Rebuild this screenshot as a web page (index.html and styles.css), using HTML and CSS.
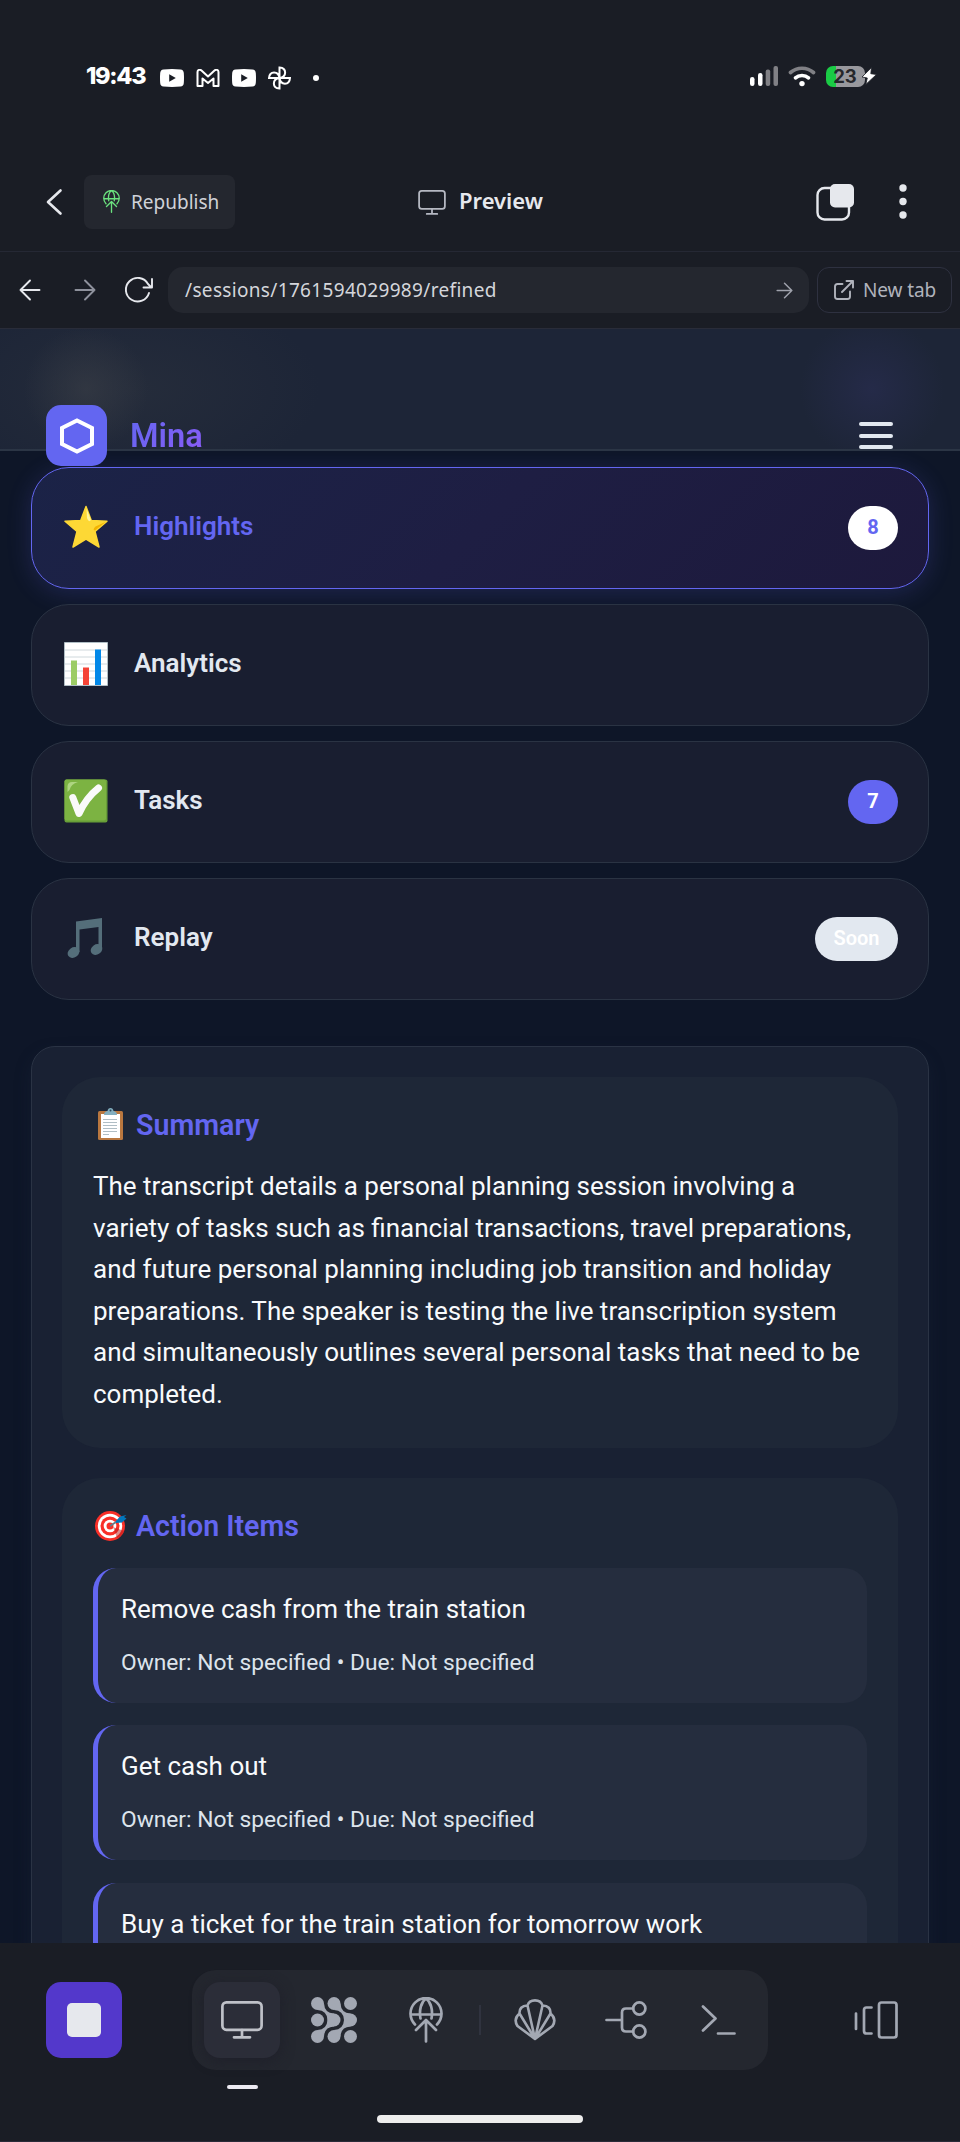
FILE: index.html
```html
<!DOCTYPE html>
<html lang="en">
<head>
<meta charset="utf-8">
<title>Mina</title>
<link rel="stylesheet" href="styles.css">
</head>
<body>
<svg class="defs" width="0" height="0">
  <defs>
    <symbol id="yt" viewBox="0 0 24 18"><path fill="#fff" fill-rule="evenodd" d="M3.500 0.400Q12-0.400 20.500 0.400Q23.600 0.800 23.800 4Q24.200 9 23.800 14Q23.600 17.200 20.500 17.600Q12 18.400 3.500 17.600Q.4 17.200.2 14Q-.2 9 .2 4Q.4.800 3.500.4ZM9.200 5.200V12.800L15.800 9Z"/></symbol>
    <symbol id="monitor" viewBox="0 0 42 38"><g fill="none" stroke="currentColor" stroke-width="2.700" stroke-linecap="round"><rect x="1.400" y="1.400" width="39.200" height="27.400" rx="4"/><path d="M21 29v7M13 36.300h16"/></g></symbol>
    <symbol id="publish" viewBox="0 0 34 46"><g fill="none" stroke="currentColor" stroke-width="2.700" stroke-linecap="round" stroke-linejoin="round"><path d="M6 27.500A15.500 15.500 0 1 1 28 27.500M1.500 17.500h31M11.500 21.500C10 13 12 5 17 1.500C22 5 24 13 22.500 21.500M17 44.500V24M7 33L17 23L27 33"/></g></symbol>
  </defs>
</svg>
<div class="phone">
  <div class="status">
    <span class="time">19:43</span>
    <div class="notifs">
      <svg width="24" height="18"><use href="#yt"/></svg>
      <svg width="24" height="18" viewBox="0 0 24 18" fill="none" stroke="#fff" stroke-width="2"><path stroke-linejoin="round" d="M1.500 17V3C1.500.6 4 .3 5.500 1.500L12 7.500L18.500 1.500C20 .3 22.500.6 22.500 3V17H17.500V9.500L12 14L6.500 9.500V17Z"/></svg>
      <svg width="24" height="18"><use href="#yt"/></svg>
      <svg class="fan" width="23" height="24" viewBox="0 0 23 24" fill="none" stroke="#fff" stroke-width="2"><path d="M11.500 12V1.500C19 2 19 11 11.500 12ZM11.500 12V22.500C4 22 4 13 11.500 12ZM11.500 12H22C21.500 19.500 12.500 19.500 11.500 12ZM11.500 12H1C1.500 4.500 10.500 4.500 11.500 12Z"/></svg>
      <i class="dot"></i>
    </div>
    <div class="sys">
      <svg width="28" height="20" viewBox="0 0 28 20"><g fill="#fff"><rect x="0" y="11" width="4.500" height="9" rx="2.200"/><rect x="8" y="7" width="4.500" height="13" rx="2.200"/></g><g fill="#808085"><rect x="15.700" y="3.500" width="4.500" height="16.500" rx="2"/><rect x="23.500" y="0" width="4.500" height="20" rx="2"/></g></svg>
      <svg width="28" height="21" viewBox="0 0 28 21" fill="none" stroke-width="3.700" stroke-linecap="round"><path stroke="#808085" d="M2.500 6.500C9 .8 19 .8 25.500 6.500"/><path stroke="#fff" d="M7.500 11.800C11 8.700 17 8.700 20.500 11.800"/><circle cx="14" cy="17.600" r="2.700" fill="#fff"/></svg>
      <div class="battery"><span>23</span></div>
      <svg class="bolt" width="16" height="18" viewBox="0 0 16 18"><path fill="#fff" stroke="#1a1d25" stroke-width=".8" d="M10.500.6L1 10L6.300 11L4.800 17.400L15.500 7.500L9.800 6.700Z"/></svg>
    </div>
  </div>

  <div class="topbar">
    <svg class="back" width="18" height="28" viewBox="0 0 18 28"><path d="M15.500 2.500L3 14L15.500 25.500" fill="none" stroke="#e6e8ed" stroke-width="2.600" stroke-linecap="round" stroke-linejoin="round"/></svg>
    <button class="republish"><svg width="17" height="23"><use href="#publish"/></svg><span>Republish</span></button>
    <div class="title"><svg width="28" height="25"><use href="#monitor"/></svg><span>Preview</span></div>
    <svg class="tabs" width="38" height="38" viewBox="0 0 38 38"><rect x="1.500" y="5" width="31.500" height="31.500" rx="7" fill="none" stroke="#e6e8ed" stroke-width="2.400"/><rect x="14" y="1" width="24" height="23.500" rx="5" fill="#e6e8ed"/></svg>
    <svg width="8" height="36" viewBox="0 0 8 36" fill="#e6e8ed"><circle cx="4" cy="4" r="3.700"/><circle cx="4" cy="17.500" r="3.700"/><circle cx="4" cy="31" r="3.700"/></svg>
  </div>

  <div class="urlbar">
    <svg class="nav-back" width="22" height="22" viewBox="0 0 22 22"><path d="M20.500 11H1.500M11 1.500L1.500 11L11 20.500"/></svg>
    <svg class="nav-fwd" width="22" height="22" viewBox="0 0 22 22"><path d="M1.500 11H20.500M11 1.500L20.500 11L11 20.500"/></svg>
    <svg class="reload" width="30" height="28" viewBox="0 0 30 28"><path d="M25 17A11.800 11.800 0 1 1 24 8L27.500 11.500M28 3V11.500H19.500"/></svg>
    <div class="url"><span>/sessions/1761594029989/refined</span><svg width="17" height="17" viewBox="0 0 22 22"><path d="M1.500 11H20.500M11 1.500L20.500 11L11 20.500"/></svg></div>
    <button class="newtab"><svg width="20" height="20" viewBox="0 0 20 20"><path d="M8.500 4H3.500Q1 4 1 6.500V16.500Q1 19 3.500 19H13.500Q16 19 16 16.500V11.500M12.500 1H19V7.500M19 1L8 12"/></svg><span>New tab</span></button>
  </div>

  <main class="view">
    <header class="appbar">
      <div class="logo"><svg width="36" height="36" viewBox="0 0 36 36"><path d="M18 2.500L33 10V26L18 33.500L3 26V10Z" fill="none" stroke="#fff" stroke-width="4"/></svg></div>
      <span class="brand">Mina</span>
      <div class="menu"><i></i><i></i><i></i></div>
    </header>

    <nav class="sections">
      <div class="tab active">
        <svg width="44" height="44" viewBox="0 0 44 44"><path fill="#fdd835" stroke="#fdd835" stroke-width="1.500" stroke-linejoin="round" d="M22 1.500L27.300 15.500L43 16.300L31 26.500L35 42L22 34L9 42L13 26.500L1 16.300L16.700 15.500Z"/><path fill="#fff59d" d="M22.500 3.500L27 15Q24.500 18 23 13Z"/><path fill="#f4b400" d="M41.500 17L31 25.500Q28 25 31.500 21.500Z"/></svg>
        <span class="label">Highlights</span><span class="badge">8</span>
      </div>
      <div class="tab">
        <svg width="44" height="44" viewBox="0 0 44 44"><path fill="#fff" stroke="#b0bec5" d="M.5.500H43.500V43.500H.5Z"/><path stroke="#cfd8dc" stroke-width="1" d="M1 8H43M1 15H43M1 22H43M1 29H43M1 36H43"/><path fill="#9ccc65" d="M7 18.500h6V43H7z"/><path fill="#f44336" d="M19 25.500h6V43h-6z"/><path fill="#0288e8" d="M31 7.500h6V43h-6z"/></svg>
        <span class="label">Analytics</span>
      </div>
      <div class="tab">
        <svg width="44" height="44" viewBox="0 0 44 44"><rect x=".5" y=".5" width="43" height="43" rx="2" fill="#689f38"/><rect x=".5" y=".5" width="41.500" height="41" rx="2" fill="#7cb342"/><path fill="#aed581" d="M3.500 13V7Q4 3 8 3H14Q7 5 5.500 11Z"/><path d="M8.800 18.500L15 34.500Q22 19 34.500 9" fill="none" stroke="#fafafa" stroke-width="7" stroke-linecap="round" stroke-linejoin="round"/></svg>
        <span class="label">Tasks</span><span class="badge">7</span>
      </div>
      <div class="tab">
        <svg width="44" height="44" viewBox="0 0 44 44" fill="#546e7a"><path d="M12 5.500L38 2V34H34.500V11L15.500 13.500V36H12Z"/><ellipse cx="9.500" cy="36.500" rx="6.200" ry="5" transform="rotate(-35 9.500 36.500)"/><ellipse cx="32.500" cy="33.500" rx="6.200" ry="5" transform="rotate(-35 32.500 33.500)"/></svg>
        <span class="label">Replay</span><span class="badge soon">Soon</span>
      </div>
    </nav>

    <section class="panel">
      <article class="card">
        <h2><svg width="34" height="34" viewBox="0 0 34 34"><rect x="5" y="4" width="25" height="29" rx="1.500" fill="#b9773f"/><path fill="#fff" d="M8 7H27V31H8Z"/><path stroke="#b0bec5" stroke-width="1" d="M10 12.500H24M10 15.500H24M10 18.500H24M10 21.500H24M10 24.500H24M10 27.500H16"/><path fill="#82aebf" d="M11 8Q11 4.500 14.500 4Q15 1 17.500 1Q20 1 20.500 4Q24 4.500 24 8Z"/><circle cx="17.500" cy="3.500" r="1" fill="#2f4858"/></svg><span>Summary</span></h2>
        <p class="summary">The transcript details a personal planning session involving a<br>variety of tasks such as financial transactions, travel preparations,<br>and future personal planning including job transition and holiday<br>preparations. The speaker is testing the live transcription system<br>and simultaneously outlines several personal tasks that need to be<br>completed.</p>
      </article>
      <article class="card">
        <h2><svg width="34" height="34" viewBox="0 0 34 34"><circle cx="17" cy="18" r="15" fill="#f92f28"/><circle cx="17" cy="18" r="12.200" fill="#fff"/><circle cx="17" cy="18" r="9.500" fill="#f92f28"/><circle cx="17" cy="18" r="6.300" fill="#fff"/><circle cx="17" cy="18" r="3.500" fill="#f92f28"/><path fill="#b71c1c" opacity=".5" d="M20 19L31 23Q28 29 24 30Z"/><path d="M17 18L26 12" stroke="#607d8b" stroke-width="1.800"/><path fill="#0277bd" d="M23 13L27 8.500L33.500 7L31 9L33.500 10.500L29 14.500L23 15Z"/></svg><span>Action Items</span></h2>
        <div class="items">
          <div class="item"><p>Remove cash from the train station</p><small>Owner: Not specified • Due: Not specified</small></div>
          <div class="item"><p>Get cash out</p><small>Owner: Not specified • Due: Not specified</small></div>
          <div class="item"><p>Buy a ticket for the train station for tomorrow work</p></div>
        </div>
      </article>
    </section>
  </main>

  <footer class="bottom">
    <div class="stop"><i></i></div>
    <div class="dock">
      <div class="tool on"><svg width="42" height="38"><use href="#monitor"/></svg></div>
      <div class="tool"><svg width="46" height="46" viewBox="0 0 46 46" fill="currentColor"><circle cx="6.500" cy="6.500" r="6.500"/><circle cx="23" cy="6.500" r="6.500"/><circle cx="39.500" cy="6.500" r="6.500"/><circle cx="6.500" cy="23" r="6.500"/><circle cx="23" cy="23" r="6.500"/><circle cx="39.500" cy="23" r="6.500"/><circle cx="6.500" cy="39.500" r="6.500"/><circle cx="23" cy="39.500" r="6.500"/><circle cx="39.500" cy="39.500" r="6.500"/><path d="M13 6.500Q13.500 16 23 16.500V29.500Q13.500 30 13 39.500L6.500 33Q16 32.500 16.500 23Q16 13.500 6.500 13ZM29.500 6.500Q30 16 39.500 16.500V29.500Q30 30 29.500 39.500L23 33Q32.500 32.500 33 23Q32.500 13.500 23 13Z"/></svg></div>
      <div class="tool"><svg width="34" height="46"><use href="#publish"/></svg></div>
      <i class="divider"></i>
      <div class="tool"><svg width="42" height="42" viewBox="0 0 42 42" fill="none" stroke="currentColor" stroke-width="2.600" stroke-linejoin="round"><path d="M21 40L3.500 27Q-1 20 5.500 14.500Q5 7 13.500 6.500Q15 1.400 21 1.400Q27 1.400 28.500 6.500Q37 7 36.500 14.500Q43 20 38.500 27ZM21 40L5.500 14.500M21 40L13.500 6.500M21 40L28.500 6.500M21 40L36.500 14.500"/></svg></div>
      <div class="tool shift"><svg width="42" height="38" viewBox="0 0 42 38" fill="none" stroke="currentColor" stroke-width="2.700" stroke-linecap="round"><path d="M1.500 19H17M28 7.500H21Q17 7.500 17 11.500V26.500Q17 30.500 21 30.500H28"/><circle cx="34.300" cy="7.500" r="6.100"/><circle cx="34.300" cy="30.500" r="6.100"/></svg></div>
      <div class="tool"><svg width="36" height="32" viewBox="0 0 36 32" fill="none" stroke="currentColor" stroke-width="2.700" stroke-linecap="round" stroke-linejoin="round"><path d="M3 2.500L15.500 14.500L3 26.500M18 29.500H34.500"/></svg></div>
    </div>
    <svg class="devices" width="44" height="38" viewBox="0 0 44 38" fill="none" stroke="currentColor" stroke-width="2.700" stroke-linecap="round"><path d="M2 12.500V28M17.500 6.500H12.500Q10 6.500 10 9V30Q10 32.500 12.500 32.500H17.500"/><rect x="25" y="1.500" width="17.500" height="35" rx="2.500"/></svg>
    <i class="mark"></i>
    <i class="home"></i>
  </footer>
</div>
</body>
</html>
```

FILE: styles.css
```css
* { box-sizing: border-box; }
body { margin: 0; background: #1a1d25; font-family: Roboto, "Liberation Sans", sans-serif; }
svg { display: block; flex: none; }
i { display: block; flex: none; }
button { font: inherit; border: 0; margin: 0; white-space: nowrap; }
.defs { position: absolute; }
.phone { width: 960px; height: 2142px; display: flex; flex-direction: column; overflow: hidden; color: #e6e8ed; }

.status { height: 152px; padding: 0 86px; display: flex; align-items: center; flex: none; }
.time { font: 800 23.5px/28px Inter, sans-serif; color: #fff; width: 74px; letter-spacing: -1.300px; }
.notifs { display: flex; align-items: center; gap: 12px; padding-top: 3px; }
.dot { width: 6px; height: 6px; border-radius: 3px; background: #fff; margin-left: 10px; }
.sys { margin-left: auto; margin-right: -2.500px; display: flex; align-items: center; gap: 10px; }
.battery { width: 39px; height: 21px; border-radius: 7px; background: linear-gradient(90deg, #1acb45 10px, #98989d 10px); color: #26272b; font: 700 18.5px/21px Inter, sans-serif; text-align: center; }
.bolt { margin: 0 0 0 -14px; }

.topbar { height: 100px; padding: 0 53px 0 45px; display: flex; align-items: center; flex: none; border-bottom: 1px solid #252834; font-family: "Noto Sans", sans-serif; }
.republish { margin-left: 21px; width: 151px; height: 54px; border-radius: 8px; background: #24272f; color: #d0d2d8; display: flex; align-items: center; padding: 0 0 0 19px; gap: 11px; font-size: 19px; }
.republish svg { color: #6be27f; }
.title { margin-left: 183px; display: flex; align-items: center; gap: 13px; font-weight: 600; font-size: 22px; color: #e6e8ed; }
.title span { margin-top: -3px; }
.title svg { color: #b5b8c2; margin-top: 2px; }
.tabs { margin-left: auto; margin-right: 45px; }

.urlbar { height: 77px; padding: 0 8px 0 19px; display: flex; align-items: center; flex: none; border-bottom: 1px solid #292c39; font-family: "Noto Sans", sans-serif; font-size: 19px; }
.urlbar path { fill: none; stroke: currentColor; stroke-width: 1.900; stroke-linecap: round; stroke-linejoin: round; }
.nav-fwd { margin-left: 33px; color: #8e919c; }
.reload { margin-left: 28px; }
.url { margin-left: 14px; width: 641px; height: 46px; border-radius: 15px; background: #24272f; display: flex; align-items: center; justify-content: space-between; padding: 0 16px 0 17px; color: #d4d6db; letter-spacing: .330px; }
.url span { margin-top: -1px; }
.url svg { color: #9fa2ac; }
.newtab { margin-left: 8px; width: 135px; height: 46px; border-radius: 12px; border: 1px solid #2e3140; background: none; color: #b0b3bc; display: flex; align-items: center; gap: 9px; padding: 0 0 0 16px; letter-spacing: -.1px; }

.view { height: 1614px; flex: none; overflow: hidden; background: #0e1628; }
.appbar { height: 122px; border-bottom: 2px solid #2b3545; position: relative; z-index: 2; display: flex; align-items: flex-start; padding: 76px 67px 0 46px;
  background: radial-gradient(circle 62px at 86px 60px, rgba(60,64,72,.55), transparent), radial-gradient(ellipse 190px 100px at 130px 60px, rgba(48,54,64,.42), transparent), radial-gradient(circle 72px at 872px 60px, rgba(42,46,84,.6), transparent), #1d2537; }
.logo { width: 61px; height: 61px; border-radius: 15px; background: #6366f1; display: flex; align-items: center; justify-content: center; flex: none; }
.brand { margin: 11px 0 0 23px; font-weight: 600; font-size: 32.600px; line-height: 40px; background: linear-gradient(135deg, #6366f1, #8b5cf6); -webkit-background-clip: text; background-clip: text; color: transparent; }
.menu { margin: 17px 0 0 auto; display: flex; flex-direction: column; gap: 7.500px; }
.menu i { width: 34px; height: 4px; border-radius: 2px; background: #e2e8f0; }

.sections { padding: 16px 31px 0; display: flex; flex-direction: column; gap: 15px; }
.tab { height: 122px; border: 1px solid #2a3343; border-radius: 38px; background: #191e30; padding: 0 30px 0 32px; display: flex; align-items: center; gap: 26px; }
.tab svg { margin-top: -2px; }
.label { font-weight: 600; font-size: 26px; line-height: 30px; color: #e2e8f0; margin-top: -4px; }
.badge { margin-left: auto; min-width: 50px; height: 44px; border-radius: 22px; padding: 0 19px; background: #6366f1; color: #fff; font-weight: 700; font-size: 20px; line-height: 42px; text-align: center; }
.badge.soon { background: #e2e8f0; padding: 0; width: 83px; font-weight: 600; }
.active { border-color: #6366f1; background: linear-gradient(135deg, #1b2347, #1e1e43 50%, #1d193c); box-shadow: 0 4px 24px rgba(99,102,241,.2); }
.active .label { color: #6366f1; }
.active .badge { background: #fff; color: #6366f1; }

.panel { margin: 46px 31px 0; border: 1px solid #2a3344; border-radius: 24px 24px 0 0; background: #192133; padding: 30px; display: flex; flex-direction: column; gap: 30px; height: 1000px; box-shadow: 0 8px 16px rgba(30,41,59,.35); }
.card { background: #1e2737; border-radius: 38px; padding: 30px 31px; flex: none; }
.card h2 { margin: 0; height: 38px; font-size: 28.600px; font-weight: 600; line-height: 38px; color: #6366f1; display: flex; align-items: center; gap: 9px; }
.card h2 svg { margin-top: -4px; }
.card h2 span { margin-top: -1.500px; }
.summary { margin: 21px 0 0; font-size: 26px; line-height: 41.600px; color: #f8fafc; white-space: nowrap; padding-bottom: 2px; }
.items { margin-top: 22px; display: flex; flex-direction: column; gap: 22.500px; }
.item { height: 135px; width: 774px; border-left: 5px solid #6366f1; border-radius: 23px; background: #252d3e; padding: 21px 23px; }
.item p { margin: 0; font-size: 26px; line-height: 41.600px; color: #f8fafc; }
.item small { display: block; margin-top: 14.500px; font-size: 22.750px; line-height: 36px; color: #dde4ec; }

.bottom { height: 199px; flex: none; position: relative; display: flex; align-items: flex-start; padding: 27px 62px 0 46px; background: #1a1d25; border-bottom: 1px solid #292c39; color: #a3a8b3; }
.stop { width: 76px; height: 76px; margin-top: 12px; border-radius: 15px; background: #5338cb; display: flex; align-items: center; justify-content: center; }
.stop i { width: 34px; height: 34px; border-radius: 5px; background: #e6e8ed; }
.dock { width: 576px; height: 100px; margin-left: 70px; border-radius: 24px; background: #24272f; display: flex; align-items: center; padding: 0 12px; }
.tool { width: 76px; height: 76px; margin-right: 16px; display: flex; align-items: center; justify-content: center; flex: none; border-radius: 16px; }
.tool.shift { margin-left: -1px; }
.tool.on { background: #2b2d38; color: #bfc1c8; box-shadow: 0 3px 14px rgba(28,29,40,.7); }
.divider { width: 2px; height: 30px; background: #30333f; margin: 0 16px 0 -1px; }
.devices { margin: 31px 0 0 auto; }
.mark { position: absolute; left: 227px; top: 142px; width: 31px; height: 4px; border-radius: 2px; background: #eceaf2; }
.home { position: absolute; left: 377px; top: 172px; width: 206px; height: 8px; border-radius: 4px; background: #ededed; }
```
